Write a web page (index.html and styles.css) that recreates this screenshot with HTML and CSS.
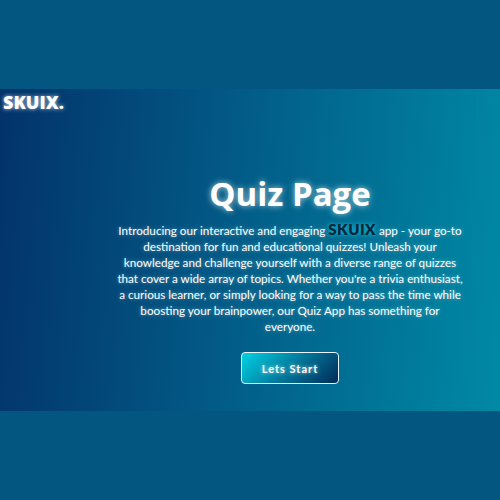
FILE: index.html
```html
<!DOCTYPE html>
<html lang="en">
<head>
<meta charset="utf-8">
<title>SKUIX Quiz</title>
<link rel="stylesheet" href="styles.css">
</head>
<body>
  <section class="hero">
    <header class="brand">SKUIX.</header>
    <main class="content">
      <h1 class="title">Quiz Page</h1>
      <p class="intro">Introducing our interactive and engaging <span class="mark">SKUIX</span> app - your go-to<br>destination for fun and educational quizzes! Unleash your<br>knowledge and challenge yourself with a diverse range of quizzes<br>that cover a wide array of topics. Whether you're a trivia enthusiast,<br>a curious learner, or simply looking for a way to pass the time while<br>boosting your brainpower, our Quiz App has something for<br>everyone.</p>
      <button class="start">Lets Start</button>
    </main>
  </section>
</body>
</html>
```
FILE: styles.css
```css
html, body {
  margin: 0;
  height: 100%;
}
body {
  background: #02567f;
  font-family: "Lato", "Open Sans", sans-serif;
  display: flex;
  align-items: center;
}
.hero {
  width: 100%;
  height: 322px;
  background: linear-gradient(95deg, #02336a 0%, #025a86 45%, #0089a5 100%);
  display: grid;
  grid-template-columns: 80px 1fr;
}
.brand {
  color: #fff;
  font-family: "Open Sans", sans-serif;
  font-weight: 800;
  font-size: 18px;
  line-height: 22px;
  padding: 2px 0 0 3px;
  text-shadow: 0 0 4px rgba(255,255,255,0.8);
}
.content {
  display: flex;
  flex-direction: column;
  align-items: center;
  padding-top: 83px;
}
.title {
  margin: 0;
  color: #fff;
  font-family: "Open Sans", sans-serif;
  font-size: 33px;
  font-weight: 700;
  line-height: 44px;
  text-shadow: 0 0 6px rgba(255,255,255,0.7);
}
.intro {
  margin: 6px 0 0;
  width: 400px;
  color: #fff;
  text-align: center;
  font-size: 11.7px;
  line-height: 16px;
  text-shadow: 0 0 4px rgba(255,255,255,0.45);
}
.mark {
  color: #04283a;
  font-weight: 800;
  font-size: 15px;
  line-height: 12px;
  letter-spacing: 0.5px;
  text-shadow: 0 0 4px #21d4f0;
}
.start {
  margin-top: 18px;
  width: 98px;
  height: 32px;
  border: 1px solid #e8f4f8;
  border-radius: 4px;
  background: linear-gradient(135deg, #00d2e3 0%, #017a9c 50%, #022a58 100%);
  color: #fff;
  font-family: inherit;
  font-weight: 700;
  font-size: 11px;
  letter-spacing: 1px;
  text-shadow: 0 0 4px rgba(255,255,255,0.7);
}
```
